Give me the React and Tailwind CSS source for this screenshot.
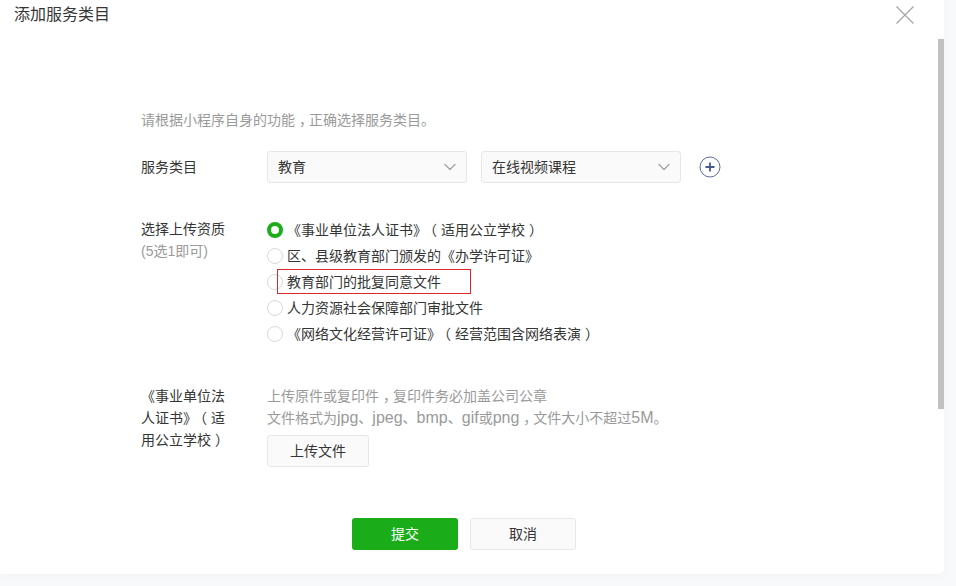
import { ChevronDown } from "lucide-react";

// 参考图里括号和逗号的字形在字框内居中，这里平移一点
function Open() {
  return <span className="inline-block -translate-x-[4px]">（</span>;
}
function Close() {
  return <span className="inline-block translate-x-[4px]">）</span>;
}
function Comma() {
  return <span className="inline-block translate-x-[4px]">，</span>;
}
// 西文字号比中文大
function En({ children }) {
  return <span className="text-[16px] leading-none">{children}</span>;
}

const options = [
  <>《事业单位法人证书》<Open />适用公立学校<Close /></>,
  <>区、县级教育部门颁发的《办学许可证》</>,
  <>教育部门的批复同意文件</>,
  <>人力资源社会保障部门审批文件</>,
  <>《网络文化经营许可证》<Open />经营范围含网络表演<Close /></>,
];

function Select({ label }) {
  return (
    <div className="w-[200px] h-8 flex items-center justify-between pl-[10px] pr-[6px] bg-[#fafafa] border border-[#e7e7eb] rounded-[3px] text-[#353535]">
      <span>{label}</span>
      <ChevronDown size={20} strokeWidth={1.75} className="text-[#a8a8a8]" />
    </div>
  );
}

function Radio({ checked }) {
  if (checked) {
    return <span className="w-4 h-4 rounded-full border-[4px] border-[#1aad19] bg-white shrink-0" />;
  }
  return <span className="w-4 h-4 rounded-full border border-[#d9d9d9] bg-white shrink-0" />;
}

export default function App() {
  return (
    <div
      className="w-[956px] h-[586px] overflow-hidden bg-[#f8f9fb] text-sm text-[#353535]"
      style={{ fontFamily: '"Liberation Sans", "Noto Sans CJK SC", sans-serif' }}
    >
      <div className="relative w-[944px] h-[574px] bg-white rounded-br-md shadow-[0_2px_8px_rgba(0,0,0,0.03)]">
        {/* Header */}
        <div className="flex items-start justify-between pl-[14px] pr-[29px] pt-[3px] h-[104px]">
          <h1 className="text-base font-normal leading-[24px] text-[#353535]">添加服务类目</h1>
          <svg width="20" height="20" viewBox="0 0 20 20" className="mt-[2px] text-[#a6a6a6]" fill="none" stroke="currentColor" strokeWidth="1.3">
            <path d="M1.5 1.5 L18.5 18.5 M18.5 1.5 L1.5 18.5" />
          </svg>
        </div>

        {/* Scrollbar */}
        <div className="absolute right-0 top-[39px] w-[6px] h-[370px] bg-[#c1c1c1]" />

        {/* Body */}
        <div className="pl-[141px]">
          <p className="leading-[32px] text-[#9a9a9a]">请根据小程序自身的功能<Comma />正确选择服务类目。</p>

          <div className="flex items-center mt-[15px]">
            <div className="w-[126px]">服务类目</div>
            <div className="flex items-center gap-[14px]">
              <Select label="教育" />
              <Select label="在线视频课程" />
            </div>
            <svg width="22" height="22" viewBox="0 0 22 22" className="ml-[18px]" fill="none">
              <circle cx="11" cy="11" r="10" stroke="#5a6e9f" strokeWidth="1" />
              <path d="M11 6.5 V15.5 M6.5 11 H15.5" stroke="#45598c" strokeWidth="1.8" />
            </svg>
          </div>

          <div className="flex mt-[35px]">
            <div className="w-[126px] leading-[22px]">
              <div>选择上传资质</div>
              <div className="text-[#9a9a9a]">(5选1即可)</div>
            </div>
            <div className="relative -mt-[1.6px]">
              {options.map((text, i) => (
                <div key={i} className="flex items-center h-[26.2px] gap-[4px]">
                  <Radio checked={i === 0} />
                  <span>{text}</span>
                </div>
              ))}
              {/* red annotation box */}
              <div className="absolute left-[10px] top-[52.6px] w-[194px] h-[25px] border border-[#e0262c]" />
            </div>
          </div>

          <div className="flex mt-[37.6px]">
            <div className="w-[126px] pr-[40px] leading-[22px]">《事业单位法人证书》<Open />适用公立学校<Close /></div>
            <div>
              <p className="leading-[22px] text-[#9a9a9a]">上传原件或复印件<Comma />复印件务必加盖公司公章</p>
              <p className="leading-[22px] text-[#9a9a9a]">
                文件格式为<En>jpg</En>、<En>jpeg</En>、<En>bmp</En>、<En>gif</En>或<En>png</En><Comma />文件大小不超过<En>5M</En>。
              </p>
              <button className="mt-[6px] w-[102px] h-8 bg-[#fafafa] border border-[#e7e7eb] rounded-[3px] text-[#353535]">上传文件</button>
            </div>
          </div>

          <div className="flex gap-[12px] ml-[211px] mt-[51px]">
            <button className="w-[106px] h-8 bg-[#1aad19] rounded-[3px] text-white">提交</button>
            <button className="w-[106px] h-8 bg-[#fafafa] border border-[#e7e7eb] rounded-[3px] text-[#353535]">取消</button>
          </div>
        </div>
      </div>
    </div>
  );
}
